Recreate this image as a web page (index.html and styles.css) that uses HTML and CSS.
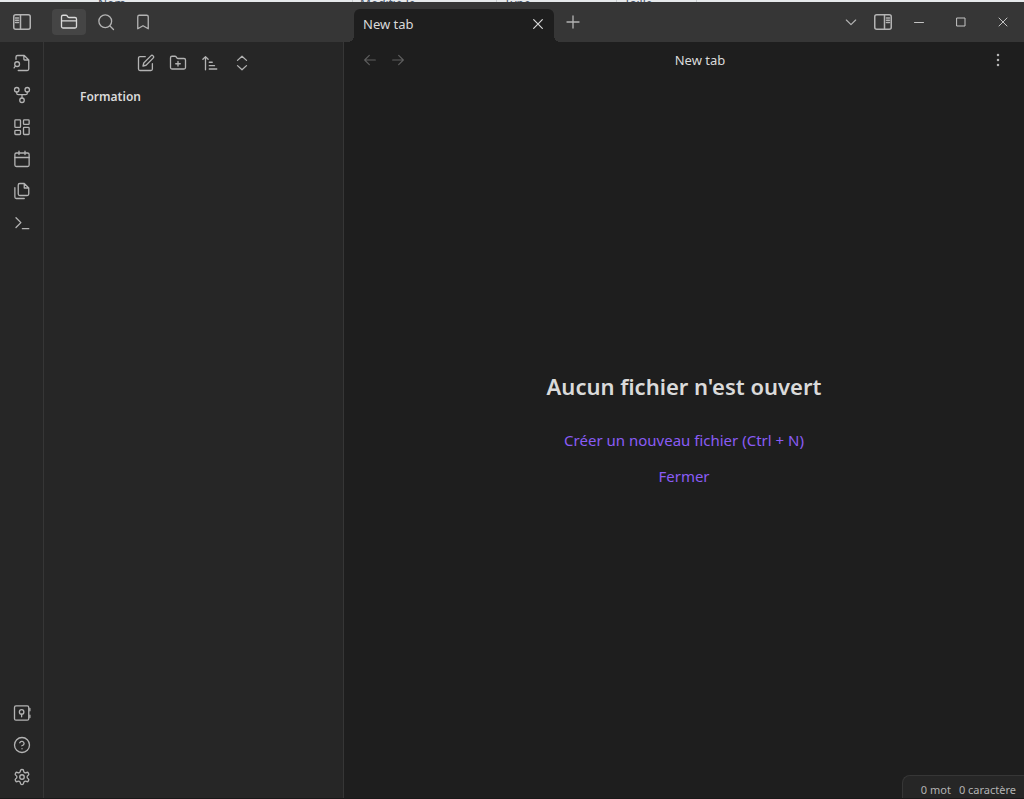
FILE: index.html
```html
<!DOCTYPE html>
<html lang="fr">
<head>
<meta charset="utf-8">
<title>New tab - Formation</title>
<link rel="stylesheet" href="styles.css">
</head>
<body>
<div class="backdrop" aria-hidden="true">
  <span>Nom</span><span>Modifié le</span><span>Type</span><span>Taille</span><span></span>
</div>
<header class="titlebar">
  <div class="titlebar-left">
    <button class="icon-button ribbon-toggle" aria-label="Réduire"><svg class="panel-icon" viewBox="0 0 18 16"><rect x=".75" y=".75" width="16.5" height="14.5" rx="2"/><path d="M7.5 1v14M2.5 4h3M2.5 6.3h3M2.5 8.6h3"/></svg></button>
    <nav class="side-tabs">
      <button class="icon-button side-tab active" aria-label="Fichiers"><svg viewBox="0 0 24 24"><path d="M22 11V8a2 2 0 0 0-2-2h-7.9a2 2 0 0 1-1.7-.9l-.8-1.2A2 2 0 0 0 7.9 3H4a2 2 0 0 0-2 2v6M2 10.500h20v7.500a2 2 0 0 1-2 2H4a2 2 0 0 1-2-2z"/></svg></button>
      <button class="icon-button side-tab" aria-label="Rechercher"><svg viewBox="0 0 24 24"><circle cx="11" cy="11" r="8.500"/><path d="m22 22-4.700-4.700"/></svg></button>
      <button class="icon-button side-tab" aria-label="Signets"><svg viewBox="0 0 24 24"><path d="m19 21-7-4-7 4V5a2 2 0 0 1 2-2h10a2 2 0 0 1 2 2z"/></svg></button>
    </nav>
  </div>
  <div class="titlebar-main">
    <div class="tab"><span class="tab-label">New tab</span><button class="icon-button tab-close" aria-label="Fermer l'onglet"><svg class="small" viewBox="0 0 24 24"><path d="M18.500 5.500l-13 13M5.500 5.500l13 13"/></svg></button></div>
    <button class="icon-button new-tab" aria-label="Nouvel onglet"><svg viewBox="0 0 24 24"><path d="M12 4v16M4 12h16"/></svg></button>
    <div class="titlebar-actions">
      <button class="icon-button" aria-label="Liste des onglets"><svg class="small" viewBox="0 0 24 24"><path d="m5 9 7 7 7-7"/></svg></button>
      <button class="icon-button" aria-label="Panneau droit"><svg class="panel-icon" viewBox="0 0 18 16"><rect x=".75" y=".75" width="16.5" height="14.5" rx="2"/><path d="M10.500 1v14M12.500 4h3M12.500 6.300h3M12.500 8.600h3"/></svg></button>
    </div>
    <div class="window-controls">
      <button class="window-button" aria-label="Réduire la fenêtre"><svg viewBox="0 0 10 10"><path d="M.5 5.500h9"/></svg></button>
      <button class="window-button" aria-label="Agrandir"><svg viewBox="0 0 10 10"><path d="M1 1h8v8H1z"/></svg></button>
      <button class="window-button" aria-label="Fermer la fenêtre"><svg viewBox="0 0 10 10"><path d="m1 1 8 8M9 1 1 9"/></svg></button>
    </div>
  </div>
</header>
<div class="workspace">
  <nav class="ribbon">
    <div class="ribbon-group">
      <button class="icon-button" aria-label="Sélecteur rapide"><svg viewBox="0 0 24 24"><path d="M4 7V4a2 2 0 0 1 2-2h9l6 6v12a2 2 0 0 1-2 2H7M14.500 2v5a1 1 0 0 0 1 1h5"/><circle cx="5.500" cy="13.500" r="3.200"/><path d="m1.500 18.500 1.700-2.500"/></svg></button>
      <button class="icon-button" aria-label="Vue graphique"><svg viewBox="0 0 24 24"><circle cx="12" cy="19" r="3"/><circle cx="5" cy="5" r="3"/><circle cx="19" cy="5" r="3"/><path d="M5 8v1.500a2 2 0 0 0 2 2h10a2 2 0 0 0 2-2V8M12 11.500V16"/></svg></button>
      <button class="icon-button" aria-label="Nouveau canevas"><svg viewBox="0 0 24 24"><rect x="2.500" y="2.500" width="7.500" height="10" rx="1"/><rect x="14" y="2.500" width="7.500" height="6" rx="1"/><rect x="14" y="12.500" width="7.500" height="9.500" rx="1"/><rect x="2.500" y="16.500" width="7.500" height="5.500" rx="1"/></svg></button>
      <button class="icon-button" aria-label="Note quotidienne"><svg viewBox="0 0 24 24"><rect x="2.500" y="4" width="19" height="18" rx="2"/><path d="M8 1.500V6M16 1.500V6M2.500 10h19"/></svg></button>
      <button class="icon-button" aria-label="Insérer un modèle"><svg viewBox="0 0 24 24"><path d="M15 2H9a2 2 0 0 0-2 2v12a2 2 0 0 0 2 2h10a2 2 0 0 0 2-2V8zM15 2v6h6"/><path d="M2.500 7.500V20a2 2 0 0 0 2 2H15"/></svg></button>
      <button class="icon-button" aria-label="Palette de commandes"><svg viewBox="0 0 24 24"><path d="m4 18 6.500-6.500L4 5M12.500 19.500H21"/></svg></button>
    </div>
    <div class="ribbon-group">
      <button class="icon-button" aria-label="Ouvrir un autre coffre"><svg viewBox="0 0 24 24"><rect x="2" y="2.500" width="19" height="19" rx="2"/><circle cx="11.500" cy="10.500" r="3"/><path d="M11.500 13.500V17M22.500 6v3M22.500 15v3"/></svg></button>
      <button class="icon-button" aria-label="Aide"><svg viewBox="0 0 24 24"><circle cx="12" cy="12" r="10"/><path d="M9 9a3 3 0 0 1 5.800 1c0 2-3 3-3 3M12 17h.01"/></svg></button>
      <button class="icon-button" aria-label="Paramètres"><svg viewBox="0 0 24 24"><path d="M12.220 2h-.44a2 2 0 0 0-2 2v.18a2 2 0 0 1-1 1.730l-.43.25a2 2 0 0 1-2 0l-.15-.08a2 2 0 0 0-2.730.73l-.22.38a2 2 0 0 0 .73 2.730l.15.1a2 2 0 0 1 1 1.720v.51a2 2 0 0 1-1 1.740l-.15.09a2 2 0 0 0-.73 2.730l.22.38a2 2 0 0 0 2.730.73l.15-.08a2 2 0 0 1 2 0l.43.25a2 2 0 0 1 1 1.730V20a2 2 0 0 0 2 2h.44a2 2 0 0 0 2-2v-.18a2 2 0 0 1 1-1.730l.43-.25a2 2 0 0 1 2 0l.15.08a2 2 0 0 0 2.730-.73l.22-.39a2 2 0 0 0-.73-2.730l-.15-.08a2 2 0 0 1-1-1.740v-.5a2 2 0 0 1 1-1.740l.15-.09a2 2 0 0 0 .73-2.730l-.22-.38a2 2 0 0 0-2.730-.73l-.15.08a2 2 0 0 1-2 0l-.43-.25a2 2 0 0 1-1-1.730V4a2 2 0 0 0-2-2z"/><circle cx="12" cy="12" r="3"/></svg></button>
    </div>
  </nav>
  <aside class="sidebar">
    <div class="explorer-actions">
      <button class="icon-button" aria-label="Nouvelle note"><svg viewBox="0 0 24 24"><path d="M11 3.500H4a2 2 0 0 0-2 2V20a2 2 0 0 0 2 2h14.500a2 2 0 0 0 2-2v-7"/><path d="M18.500 2.500a2.120 2.120 0 0 1 3 3L12 15l-4 1 1-4z"/></svg></button>
      <button class="icon-button" aria-label="Nouveau dossier"><svg viewBox="0 0 24 24"><path d="M4 20h16a2 2 0 0 0 2-2V8a2 2 0 0 0-2-2h-7.930a2 2 0 0 1-1.660-.9l-.82-1.200A2 2 0 0 0 7.930 3H4a2 2 0 0 0-2 2v13a2 2 0 0 0 2 2zM12 10v6M9 13h6"/></svg></button>
      <button class="icon-button" aria-label="Trier"><svg viewBox="0 0 24 24"><path d="m2.500 7 3.500-3.500L9.500 7M6 3.500V21M11 11h4M11 15.500h7M11 20h10"/></svg></button>
      <button class="icon-button" aria-label="Tout déplier"><svg viewBox="0 0 24 24"><path d="m6 15.500 6 5.500 6-5.500M6 8.500 12 3l6 5.500"/></svg></button>
    </div>
    <div class="vault-name">Formation</div>
  </aside>
  <main class="leaf">
    <div class="view-header">
      <div class="view-nav">
        <button class="icon-button" disabled aria-label="Précédent"><svg class="small" viewBox="0 0 24 24"><path d="m11 19-7-7 7-7M20 12H4"/></svg></button>
        <button class="icon-button" disabled aria-label="Suivant"><svg class="small" viewBox="0 0 24 24"><path d="M4 12h16M13 5l7 7-7 7"/></svg></button>
      </div>
      <div class="view-title">New tab</div>
      <button class="icon-button" aria-label="Plus d'options"><svg class="small dots" viewBox="0 0 24 24"><circle cx="12" cy="4.500" r="1"/><circle cx="12" cy="12" r="1"/><circle cx="12" cy="19.500" r="1"/></svg></button>
    </div>
    <div class="empty-state">
      <h1 class="empty-title">Aucun fichier n'est ouvert</h1>
      <a class="empty-action" href="#nouveau">Créer un nouveau fichier (Ctrl + N)</a>
      <a class="empty-action" href="#fermer">Fermer</a>
    </div>
    <div class="status-bar"><span>0 mot</span><span>0 caractère</span></div>
  </main>
</div>
</body>
</html>
```
FILE: styles.css
```css
* { box-sizing: border-box; }

body {
  margin: 0;
  height: 100vh;
  display: flex;
  flex-direction: column;
  overflow: hidden;
  background: #1e1e1e;
  color: #dadada;
  font: 13px/20px "Noto Sans", "Open Sans", sans-serif;
}

/* Column headings of the window behind, seen above the title bar */
.backdrop {
  flex: none;
  height: 2px;
  padding-left: 91px;
  display: grid;
  grid-template-columns: 261px 144px 120px 80px 1fr;
  align-items: end;
  overflow: hidden;
  background: #e6e9eb;
  color: #46566b;
  font-size: 12px;
  line-height: 8px;
}

.backdrop span { padding-left: 7px; }
.backdrop span + span { height: 8px; border-left: 1px solid #c9cdd0; }

button { font: inherit; }

.icon-button {
  display: flex;
  flex: none;
  align-items: center;
  justify-content: center;
  width: 28px;
  height: 28px;
  padding: 0;
  border: 0;
  border-radius: 4px;
  background: none;
  color: #b3b3b3;
}

svg {
  display: block;
  width: 18px;
  height: 18px;
  fill: none;
  stroke: currentColor;
  stroke-width: 1.75;
  stroke-linecap: round;
  stroke-linejoin: round;
}

.small { width: 16px; height: 16px; }
.panel-icon { height: 16px; stroke-width: 1.5; }

.titlebar {
  flex: none;
  display: flex;
  height: 40px;
  background: #363636;
}

.titlebar-left {
  flex: none;
  display: flex;
  align-items: center;
  width: 344px;
}

.ribbon-toggle { width: 44px; }

.side-tabs {
  display: flex;
  gap: 3px;
  padding-left: 8px;
}

.side-tab { width: 34px; height: 26px; }
.side-tab.active { background: #454545; color: #dadada; }

.titlebar-main {
  flex: 1;
  display: flex;
  align-items: center;
  padding-left: 10px;
}

.tab {
  position: relative;
  align-self: flex-end;
  display: flex;
  align-items: center;
  justify-content: space-between;
  width: 200px;
  height: 33px;
  padding: 0 2px 4px 9px;
  border-radius: 6px 6px 0 0;
  background: #1e1e1e;
}

.tab::before,
.tab::after {
  content: "";
  position: absolute;
  bottom: 0;
  width: 6px;
  height: 6px;
}

.tab::before { right: 100%; background: radial-gradient(circle at 0 0, transparent 6px, #1e1e1e 6px); }
.tab::after { left: 100%; background: radial-gradient(circle at 100% 0, transparent 6px, #1e1e1e 6px); }

.tab-close { color: #dadada; }
.new-tab { margin-left: 5px; }

.titlebar-actions {
  display: flex;
  gap: 4px;
  margin-left: auto;
  padding-right: 1px;
}

.window-controls { display: flex; }

.window-button {
  display: flex;
  align-items: center;
  justify-content: center;
  width: 42px;
  height: 40px;
  padding: 0;
  border: 0;
  background: none;
  color: #c4c4c4;
}

.window-button svg { width: 10px; height: 10px; stroke-width: 1; }

.workspace {
  flex: 1;
  display: flex;
  min-height: 0;
  border-bottom: 1px solid #191919;
}

.ribbon {
  flex: none;
  display: flex;
  flex-direction: column;
  justify-content: space-between;
  width: 44px;
  padding: 7px 0;
  border-right: 1px solid #363636;
  background: #262626;
}

.ribbon-group {
  display: flex;
  flex-direction: column;
  align-items: center;
  gap: 4px;
}

.sidebar {
  flex: none;
  width: 300px;
  padding-top: 7px;
  border-right: 1px solid #363636;
  background: #262626;
}

.explorer-actions {
  display: flex;
  justify-content: center;
  gap: 4px;
}

.vault-name {
  padding: 10px 36px;
  font-weight: 600;
  font-size: 12px;
}

.leaf {
  position: relative;
  flex: 1;
  display: flex;
  flex-direction: column;
  min-width: 0;
}

.view-header {
  display: flex;
  align-items: center;
  height: 36px;
  padding: 0 12px;
}

.view-nav { display: flex; margin-right: 4px; }
.view-nav .icon-button { color: #5e5e5e; }
.view-title { flex: 1; text-align: center; }
.dots { fill: currentColor; }

.empty-state {
  flex: 1;
  display: flex;
  flex-direction: column;
  align-items: center;
  justify-content: center;
  padding-bottom: 12px;
}

.empty-title {
  margin: 0 0 20px;
  font-size: 22px;
  font-weight: 600;
  line-height: 32px;
}

.empty-action {
  padding: 8px 16px;
  color: #8a5cf5;
  font-size: 15px;
  text-decoration: none;
}

.status-bar {
  position: absolute;
  right: 0;
  bottom: 0;
  display: flex;
  gap: 8px;
  padding: 6px 8px 0 18px;
  border: solid #363636;
  border-width: 1px 0 0 1px;
  border-radius: 8px 0 0 0;
  background: #262626;
  color: #b3b3b3;
  font-size: 11px;
  line-height: 16px;
}
```
